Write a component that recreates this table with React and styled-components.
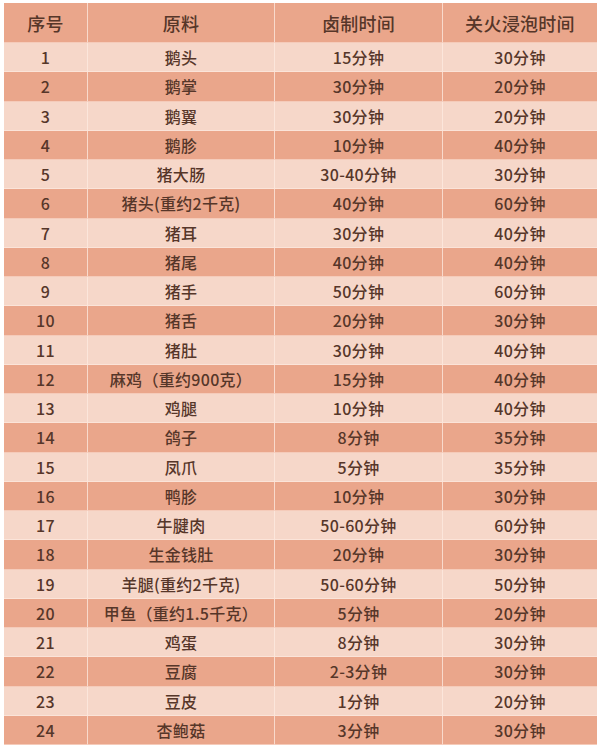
import styled, { createGlobalStyle } from "styled-components";

const rows = [
  ["1", "鹅头", "15分钟", "30分钟"],
  ["2", "鹅掌", "30分钟", "20分钟"],
  ["3", "鹅翼", "30分钟", "20分钟"],
  ["4", "鹅胗", "10分钟", "40分钟"],
  ["5", "猪大肠", "30-40分钟", "30分钟"],
  ["6", "猪头(重约2千克)", "40分钟", "60分钟"],
  ["7", "猪耳", "30分钟", "40分钟"],
  ["8", "猪尾", "40分钟", "40分钟"],
  ["9", "猪手", "50分钟", "60分钟"],
  ["10", "猪舌", "20分钟", "30分钟"],
  ["11", "猪肚", "30分钟", "40分钟"],
  ["12", "麻鸡（重约900克）", "15分钟", "40分钟"],
  ["13", "鸡腿", "10分钟", "40分钟"],
  ["14", "鸽子", "8分钟", "35分钟"],
  ["15", "凤爪", "5分钟", "35分钟"],
  ["16", "鸭胗", "10分钟", "30分钟"],
  ["17", "牛腱肉", "50-60分钟", "60分钟"],
  ["18", "生金钱肚", "20分钟", "30分钟"],
  ["19", "羊腿(重约2千克)", "50-60分钟", "50分钟"],
  ["20", "甲鱼（重约1.5千克）", "5分钟", "20分钟"],
  ["21", "鸡蛋", "8分钟", "30分钟"],
  ["22", "豆腐", "2-3分钟", "30分钟"],
  ["23", "豆皮", "1分钟", "20分钟"],
  ["24", "杏鲍菇", "3分钟", "30分钟"],
];

const headers = ["序号", "原料", "卤制时间", "关火浸泡时间"];

const Global = createGlobalStyle`
  body {
    margin: 0;
    background: #ffffff;
    font-family: "Noto Sans CJK SC", "Noto Sans", sans-serif;
  }
`;

const Page = styled.div`
  width: 600px;
  height: 750px;
  padding: 3px 3px 5px 4px;
  box-sizing: border-box;
`;

const Table = styled.div`
  display: grid;
  grid-template-columns: 84px 187px 168px 154px;
  grid-template-rows: 40px repeat(24, 1fr);
  height: 742px;
`;

const Cell = styled.div`
  display: flex;
  align-items: center;
  justify-content: center;
  background: ${(p) => (p.$dark ? "#eaa68b" : "#f6d7c9")};
  color: #563629;
  font-size: ${(p) => (p.$head ? "18px" : "16px")};
  font-weight: 500;
  letter-spacing: 0.3px;
  white-space: nowrap;
  border-right: ${(p) => (p.$last ? "none" : "1px solid rgba(255, 236, 226, 0.75)")};
  border-bottom: 1px solid rgba(255, 240, 232, 0.5);
`;

export default function App() {
  return (
    <Page>
      <Global />
      <Table>
        {headers.map((h, i) => (
          <Cell key={h} $head $dark $last={i === 3}>
            {h}
          </Cell>
        ))}
        {rows.map((r, ri) =>
          r.map((c, ci) => (
            <Cell key={ri + "-" + ci} $dark={ri % 2 === 1} $last={ci === 3}>
              {c}
            </Cell>
          ))
        )}
      </Table>
    </Page>
  );
}
